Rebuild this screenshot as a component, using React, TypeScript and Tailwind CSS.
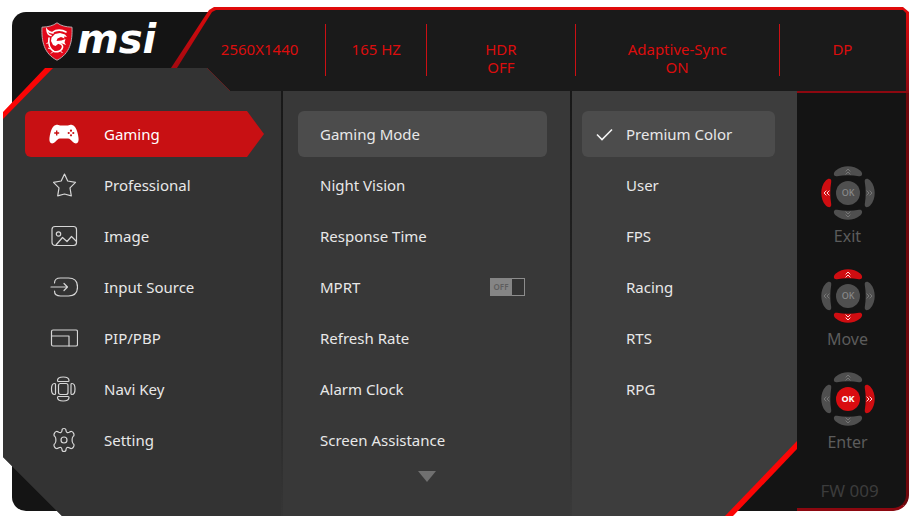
import type { ReactNode } from "react";

function Line({ children }: { children: ReactNode }) {
  return (
    <svg
      viewBox="0 0 28 28"
      className="h-7 w-7 shrink-0"
      fill="none"
      stroke="#d6d6d6"
      strokeWidth="1.2"
      strokeLinecap="round"
      strokeLinejoin="round"
      aria-hidden="true"
    >
      {children}
    </svg>
  );
}

const icons: Record<string, ReactNode> = {
  Gaming: (
    <svg viewBox="0 0 30 20" className="h-5 w-[30px] shrink-0" aria-hidden="true">
      <path
        d="M7.5 .8C9.5 .2 10.5 1.6 12 1.600H18C19.500 1.600 20.500 .2 22.500 .8C25.500 1.400 27.100 4 28.100 7.200C29.100 10.500 30.300 15.800 29.100 18C28.200 20 25.600 19.700 23.900 18C22.200 16.300 21 14.400 19 14.400H11C9 14.400 7.800 16.300 6.100 18C4.400 19.700 1.800 20 .9 18C-.3 15.800 .9 10.500 1.900 7.200C2.900 4 4.500 1.400 7.500 .8Z"
        fill="#fff"
      />
      <path d="M5.200 9h5M7.700 6.500v5" stroke="#c81013" strokeWidth="1.400" />
      <g fill="#c81013">
        <circle cx="22" cy="6.700" r="1.100" />
        <circle cx="22" cy="11.300" r="1.100" />
        <circle cx="19.700" cy="9" r="1.100" />
        <circle cx="24.300" cy="9" r="1.100" />
      </g>
    </svg>
  ),
  Professional: (
    <Line>
      <path d="M14.500 3l3.200 7 7.800 1.300-5.500 5.500 1.300 8-6.800-1.800-6.800 1.800 1.300-8L3.500 11.300l7.700-1.300Z" />
    </Line>
  ),
  Image: (
    <Line>
      <rect x="2" y="4.500" width="24.500" height="19" rx="3" />
      <circle cx="8.500" cy="12" r="2.200" />
      <path d="M6 23l6.500-7.500 4.500 4 4.500-5 5 5" />
    </Line>
  ),
  "Input Source": (
    <Line>
      <path d="M4.500 10c0-3.500 2-5 6-5h8c5 0 9 1.500 9 9s-4 9-9 9h-8c-4 0-6-1.500-6-5" />
      <path d="M1 14h16.500M14 10.500l3.500 3.500-3.500 3.500" />
    </Line>
  ),
  "PIP/PBP": (
    <Line>
      <rect x="1.500" y="6" width="26" height="16" rx="1.500" />
      <path d="M1.500 12h17.500v10" />
    </Line>
  ),
  "Navi Key": (
    <Line>
      <rect x="8.500" y="8.500" width="9.500" height="11" rx="2" />
      <path d="M7.500 5.500c0-2.200 2-3.500 5.700-3.500s5.800 1.300 5.800 3.500c0 .7-.3 1-.8 1H8.300c-.5 0-.8-.3-.8-1ZM7.500 22.500c0 2.200 2 3.500 5.700 3.500s5.800-1.300 5.800-3.500c0-.7-.3-1-.8-1H8.300c-.5 0-.8.3-.8 1ZM4.500 8.500c-2 0-3 2.300-3 5.500s1 5.500 3 5.500c.7 0 1-.3 1-.8v-9.400c0-.5-.3-.8-1-.8ZM22 8.500c2 0 3 2.300 3 5.500s-1 5.500-3 5.500c-.7 0-1-.3-1-.8v-9.400c0-.5.300-.8 1-.8Z" />
    </Line>
  ),
  Setting: (
    <Line>
      <path d="M12 4.500q0-2 2-2t2 2c.2 2 1.600 2.700 3.200 1.800q2.800-1.800 4 .3 1.800 2.800-.2 4c-1.200 1-1.200 5.800 0 6.800q2 1.200.2 4-1.200 2.100-4 .3c-1.600-.9-3-.2-3.200 1.800q0 2-2 2t-2-2c-.2-2-1.600-2.700-3.200-1.800q-2.800 1.800-4-.3-1.800-2.800.2-4c1.200-1 1.200-5.800 0-6.800q-2-1.200-.2-4 1.200-2.100 4-.3c1.600.9 3 .2 3.200-1.800Z" />
      <circle cx="14" cy="14" r="3" />
    </Line>
  ),
};

const menu = ["Gaming", "Professional", "Image", "Input Source", "PIP/PBP", "Navi Key", "Setting"];
const options = ["Gaming Mode", "Night Vision", "Response Time", "MPRT", "Refresh Rate", "Alarm Clock", "Screen Assistance"];
const modes = ["Premium Color", "User", "FPS", "Racing", "RTS", "RPG"];
const status = ["2560X1440", "165 HZ", "HDR\nOFF", "Adaptive-Sync\nON", "DP"];

function Logo() {
  return (
    <div className="flex h-[61px] w-[168px] shrink-0 items-center gap-1 pt-2 pl-[38px]">
      <svg viewBox="0 0 32 39" className="h-[39px] w-8 shrink-0" aria-hidden="true">
        <path
          d="M16 .8C20 3.800 25 5 31 5.200c.6 14-2 26.500-15 33C3 31.700.4 19.200 1 5.200 7 5 12 3.800 16 .8Z"
          fill="#e2081a"
          stroke="#b9a9ab"
          strokeWidth="1"
        />
        <path
          d="M25 10c-4-2.500-10-2.500-13 0M12 11c-2.500-.5-4.500-1-6-3 .2 3 1.500 5 4 5.500M8 16c-1 6 1 11 5 13.500 4 1 8-1 8.500-4 .5-2-1-3.500-3-4"
          fill="none"
          stroke="#fff"
          strokeWidth="1.600"
          strokeLinecap="round"
        />
        <path
          d="M10.500 15.500l3.500-3.500 5-1 5 1.500 2 2.500-3-.5.5 2-3.500-1.500-3.500 1.500-1 2.500 5-.5 4-1.500-1 3.500 1.500 2.500-4-1.500-4 .5-2.500 2-2.500-1-2-4Z"
          fill="#fff"
        />
        <path d="M9.500 27l-2.500-1M12 29.500l-2 2M19.500 29l2 2M8 20.500l-2.500 1" stroke="#fff" strokeWidth="1" />
      </svg>
      <span className="pb-[5px] font-['DejaVu_Sans',sans-serif] text-[40px] leading-10 font-bold text-white italic">msi</span>
    </div>
  );
}

type Dir = "up" | "down" | "left" | "right" | "ok";

function Pad({ active }: { active: Dir[] }) {
  const arms: [Dir, number][] = [
    ["up", 0],
    ["right", 90],
    ["down", 180],
    ["left", 270],
  ];
  const ok = active.includes("ok");
  return (
    <svg viewBox="0 0 54 54" className="h-[54px] w-[54px]" aria-hidden="true">
      {arms.map(([dir, angle]) => {
        const on = active.includes(dir);
        return (
          <g key={dir} transform={`rotate(${angle} 27 27)`}>
            <path
              d="M14.500 4.800C18 1.500 23 .3 27 .3S36 1.500 39.500 4.800C42.500 8 41 10.800 38 10.200C31 9 23 9 16 10.200C13 10.800 11.500 8 14.500 4.800Z"
              fill={on ? "#cf0d11" : "#4f4f4f"}
            />
            <path
              d="M24.600 5.400L27 3l2.400 2.400M24.600 8.400L27 6l2.400 2.400"
              fill="none"
              stroke={on ? "#ffd9d9" : "#777"}
              strokeWidth="1"
            />
          </g>
        );
      })}
      <circle cx="27" cy="27" r="12" fill={ok ? "#d90c10" : "#4f4f4f"} />
      <text
        x="27"
        y="30"
        textAnchor="middle"
        fontSize="9"
        fontFamily="Noto Sans, sans-serif"
        fontWeight={ok ? 700 : 500}
        fill={ok ? "#fff" : "#8a8a8a"}
      >
        OK
      </text>
    </svg>
  );
}

const keys: { label: string; active: Dir[] }[] = [
  { label: "Exit", active: ["left"] },
  { label: "Move", active: ["up", "down"] },
  { label: "Enter", active: ["right", "ok"] },
];

export default function App() {
  return (
    <main className="grid bg-white pt-[7px] pr-[5px] pb-3 pl-[3px] font-['Noto_Sans',sans-serif] text-[15px] leading-5 text-[#e8e8e8]">
      <div className="col-start-1 row-start-1 mt-[5px] mr-1 mb-[5px] ml-[9px] rounded-[14px] bg-[#141414]" />

      <div className="col-start-1 row-start-1 flex flex-col">
        <header className="flex h-[86px] items-start">
          <Logo />
          <div className="h-full flex-1 bg-linear-to-b from-[#e00a0a] to-[#8c0810] [clip-path:polygon(0_61px,38px_3px,43px_0,calc(100%-6px)_0,100%_5px,100%_100%,0_100%)]">
            <div className="h-full bg-[#1a1a1a] pt-[17px] pr-[3px] pl-[23px] [clip-path:polygon(6px_61px,41px_5px,45px_3px,calc(100%-6px)_3px,calc(100%-3px)_6px,calc(100%-3px)_calc(100%-2px),6px_calc(100%-2px))]">
              <ul className="grid h-[52px] grid-cols-[132fr_101fr_148fr_204fr_126fr] text-center leading-[18px] text-[#dc0d0d]">
                {status.map((text) => (
                  <li
                    key={text}
                    className="border-r border-r-[#cc1014] pt-4 whitespace-pre-line last:border-r-transparent"
                  >
                    {text}
                  </li>
                ))}
              </ul>
            </div>
          </div>
        </header>

        <div className="isolate -mt-[25px] flex">
          <div className="w-[278px] shrink-0 bg-[linear-gradient(#fb0505_60px,#333_60px)] [clip-path:polygon(42px_0,204px_0,227px_23px,100%_23px,100%_100%,59px_100%,0_calc(100%-59px),0_44px)]">
            <nav
              aria-label="Menu"
              className="flex h-full flex-col gap-[5px] bg-[#333] pt-[43px] pr-[17px] pl-[22px] [clip-path:polygon(50px_0,100%_0,100%_100%,0_100%,0_51px)]"
            >
              {menu.map((name, i) => (
                <button
                  key={name}
                  type="button"
                  aria-current={i === 0 ? "page" : undefined}
                  className={
                    i === 0
                      ? "flex h-[46px] items-center gap-[25px] rounded-l-md bg-[#c81013] pl-6 text-left text-white [clip-path:polygon(0_0,calc(100%-17px)_0,100%_50%,calc(100%-17px)_100%,0_100%)]"
                      : "flex h-[46px] items-center gap-[26px] pl-[25px] text-left"
                  }
                >
                  {icons[name]}
                  {name}
                </button>
              ))}
            </nav>
          </div>

          <div className="mt-[23px] w-[2px] shrink-0 bg-linear-to-b from-[#181818] via-[#1f1f1f] to-[#363636]" />

          <section aria-label="Gaming" className="mt-[23px] flex flex-1 flex-col bg-[#383838] pb-[34px]">
            <ul className="flex flex-col gap-[5px] pt-5 pr-[23px] pl-[15px]">
              {options.map((name, i) => (
                <li key={name}>
                  {name === "MPRT" ? (
                    <label className="flex h-[46px] items-center justify-between px-[22px]">
                      {name}
                      <span className="grid">
                        <input
                          type="checkbox"
                          role="switch"
                          className="col-start-1 row-start-1 h-[18px] w-[35px] appearance-none border border-[#8c8c8c] bg-[#333]"
                        />
                        <span className="col-start-1 row-start-1 h-[18px] w-[22px] bg-[#858585] text-center text-[8px] leading-[18px] font-semibold text-[#5e5e5e]">
                          OFF
                        </span>
                      </span>
                    </label>
                  ) : (
                    <button
                      type="button"
                      className={
                        i === 0
                          ? "h-[46px] w-full rounded-md bg-[#4c4c4c] px-[22px] text-left"
                          : "h-[46px] w-full px-[22px] text-left"
                      }
                    >
                      {name}
                    </button>
                  )}
                </li>
              ))}
            </ul>
            <button type="button" aria-label="More" className="mt-2 self-center">
              <svg viewBox="0 0 18 11" className="h-[11px] w-[18px]" aria-hidden="true">
                <path d="M0 0h18L9 11Z" fill="#707070" />
              </svg>
            </button>
          </section>

          <div className="mt-[23px] w-[2px] shrink-0 bg-linear-to-b from-[#181818] via-[#222] to-[#3a3a3a]" />

          <div className="mt-[23px] w-[225px] shrink-0 bg-[#fb0505] [clip-path:polygon(0_0,100%_0,100%_calc(100%-67px),calc(100%-64px)_100%,0_100%)]">
            <fieldset className="flex h-full flex-col gap-[5px] bg-[#3d3d3d] pt-5 pr-[22px] pl-[10px] [clip-path:polygon(0_0,100%_0,100%_calc(100%-75px),calc(100%-72px)_100%,0_100%)]">
              {modes.map((name, i) => (
                <label
                  key={name}
                  className={
                    i === 0
                      ? "flex h-[46px] items-center gap-[13px] rounded-md bg-[#4c4c4c] pl-[14px]"
                      : "flex h-[46px] items-center gap-[13px] pl-[14px]"
                  }
                >
                  <span className="grid">
                    <input
                      type="radio"
                      name="mode"
                      defaultChecked={i === 0}
                      className="peer col-start-1 row-start-1 h-[17px] w-[17px] appearance-none"
                    />
                    <svg
                      viewBox="0 0 17 17"
                      className="col-start-1 row-start-1 hidden h-[17px] w-[17px] peer-checked:block"
                      fill="none"
                      stroke="#f2f2f2"
                      strokeWidth="1.600"
                      aria-hidden="true"
                    >
                      <path d="M1 8.500l5 5L16 3.500" />
                    </svg>
                  </span>
                  {name}
                </label>
              ))}
            </fieldset>
          </div>

          <aside className="mt-[25px] mb-[5px] flex w-[112px] shrink-0 flex-col items-center rounded-br-[16px] border-r-3 border-b-3 border-r-[#6e070c] border-b-[#8c0810] bg-[#141414] pt-[73px] pr-2 text-base leading-5 text-[#5c5c5c]">
            <div className="flex flex-col gap-[23px]">
              {keys.map(({ label, active }) => (
                <button key={label} type="button" className="flex flex-col items-center gap-[6px]">
                  <Pad active={active} />
                  <span>{label}</span>
                </button>
              ))}
            </div>
            <p className="mt-[29px] pl-1 text-[17px] text-[#3c3c3c]">FW 009</p>
          </aside>
        </div>
      </div>
    </main>
  );
}
